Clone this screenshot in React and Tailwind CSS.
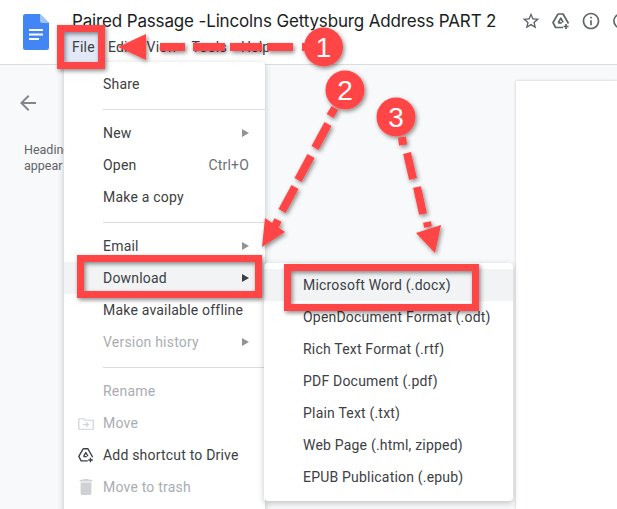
const Arrow = ({ dark }) => (
  <svg width="8" height="8" viewBox="0 0 8 8" className="absolute left-[178px] top-[12px]">
    <polygon points="0,0 7,4 0,8" fill={dark ? "#3c4043" : "#909498"} />
  </svg>
);

const Divider = () => <div className="mb-[7px] ml-[39px] mt-[9px] h-px bg-[#dadce0]" />;

const Item = ({ label, shortcut, sub, disabled, active, icon }) => (
  <div className={`relative flex h-8 items-center pl-[39px] pr-4 text-sm tracking-[0.2px] ${active ? "bg-[#f1f3f4]" : ""} ${disabled ? "text-[#a9adb2]" : "text-[#3c4043]"}`}>
    {icon && <span className="absolute left-[12px] top-[6px] flex h-5 w-5 items-center justify-center">{icon}</span>}
    <span>{label}</span>
    {shortcut && <span className="ml-auto text-[#6b6f73]">{shortcut}</span>}
    {sub && <Arrow dark={active} />}
  </div>
);

const DriveAdd = ({ color, size = 18, strokeWidth = 1.7 }) => (
  <svg width={size} height={size} viewBox="0 0 20 20" fill="none" stroke={color} strokeWidth={strokeWidth} strokeLinejoin="round">
    <path d="M7 3h5l5.5 9.5M7 3L2 11.5 4.6 16.5H12M7 3" />
    <path d="M7.2 11.8L9.8 7.2l2.4 4.2M7.2 11.8h3.6" />
    <path d="M15 13v5M12.5 15.5h5" />
  </svg>
);

const Folder = () => (
  <svg width="16" height="14" viewBox="0 0 16 14" fill="none">
    <path d="M.75 2.75h5l1.5 1.5h8v9H.75z" stroke="#d0d2d5" strokeWidth="1.2" />
    <path d="M5 8.5h5M8 6.2l2.4 2.3L8 10.8" stroke="#d0d2d5" strokeWidth="1.1" />
  </svg>
);

const Trash = () => (
  <svg width="18" height="18" viewBox="3 2 18 20" fill="#cfd1d4">
    <path d="M6 19c0 1.1.9 2 2 2h8c1.1 0 2-.9 2-2V7H6v12zM19 4h-3.5l-1-1h-5l-1 1H5v2h14V4z" />
  </svg>
);

const DocsLogo = () => (
  <svg width="26" height="36" viewBox="0 0 26 36" className="shrink-0">
    <path d="M2.5 0H17l9 9v24.5a2.5 2.5 0 0 1-2.5 2.5h-21A2.5 2.5 0 0 1 0 33.500v-31A2.500 2.500 0 0 1 2.500 0z" fill="#4285f4" />
    <path d="M17 0l9 9h-6.500A2.500 2.500 0 0 1 17 6.500z" fill="#a1c2fa" />
    <path d="M6 15h14v2H6zM6 19.500h14v2H6zM6 24h10v2H6z" fill="#fff" />
  </svg>
);

const Overlay = () => {
  const red = "#ff4444";
  const dashes = [
    [160, 47, 185, 47], [193, 47, 225, 47], [230, 47, 262, 47], [267, 47, 293, 47], [302, 47, 312, 47],
    [335, 108, 330, 116], [328, 124, 315, 148], [311, 156, 298, 180], [295, 187, 282, 211], [278, 220, 275, 226],
    [402, 137, 403, 145], [407, 153, 413, 179], [417, 187, 423, 214], [427, 222, 428, 227],
  ];
  const boxes = [
    [60.5, 28.5, 41, 37],
    [80.5, 258.5, 178, 36],
    [287.5, 267.5, 188, 40],
  ];
  const circles = [[323.5, 47, "1"], [345, 90, "2"], [396, 117, "3"]];
  return (
    <svg width="617" height="509" viewBox="0 0 617 509" className="pointer-events-none absolute left-0 top-0">
      <defs>
        <filter id="s" x="-20%" y="-20%" width="150%" height="150%">
          <feDropShadow dx="1.500" dy="2" stdDeviation="2" floodColor="#000" floodOpacity="0.45" />
        </filter>
      </defs>
      <g filter="url(#s)">
        {boxes.map(([x, y, w, h], i) => (
          <rect key={i} x={x} y={y} width={w} height={h} fill="none" stroke={red} strokeWidth="7" />
        ))}
        {dashes.map(([a, b, c, d], i) => (
          <line key={i} x1={a} y1={b} x2={c} y2={d} stroke={red} strokeWidth="8" />
        ))}
        <polygon points="118,47 146,34 146,60" fill={red} />
        <polygon points="262,247 285,232 265,218" fill={red} />
        <polygon points="435,253 416,233 441,225" fill={red} />
        {circles.map(([x, y]) => (
          <circle key={x} cx={x} cy={y} r="19.500" fill={red} />
        ))}
      </g>
      {circles.map(([x, y, t]) => (
        <text key={t} x={x} y={y + 10} textAnchor="middle" fill="#fff" fontSize="28" fontFamily="'Liberation Sans', sans-serif">
          {t}
        </text>
      ))}
    </svg>
  );
};

export default function App() {
  return (
    <div className="relative flex h-[509px] w-[617px] flex-col overflow-hidden bg-[#f8f9fa] font-['Roboto',sans-serif]">
      <header className="flex h-[65px] shrink-0 border-b border-[#dadce0] bg-white pl-[23px]">
        <div className="mt-[14px]"><DocsLogo /></div>
        <div className="ml-[23px] flex min-w-0 flex-1 flex-col">
          <div className="mt-[10px] flex h-6 items-center">
            <span className="whitespace-nowrap text-[17px] tracking-[-0.15px] text-[#1a1d21] font-['Inter',sans-serif]">
              Paired Passage -Lincolns Gettysburg Address PART 2
            </span>
          </div>
          <nav className="mt-[3px] flex gap-[14px] text-sm tracking-[0.2px] text-[#3c4043]">
            <span className="w-[22px]">File</span><span>Edit</span><span>View</span><span>Tools</span><span>Help</span>
          </nav>
        </div>
        <div className="absolute left-[521px] top-[11px] flex items-center gap-[10px]">
          <svg width="20" height="20" viewBox="0 0 24 24" fill="#5f6368"><path d="M22 9.240l-7.190-.620L12 2 9.190 8.630 2 9.240l5.460 4.730L5.820 21 12 17.270 18.180 21l-1.630-7.030L22 9.240zM12 15.400l-3.760 2.270 1-4.280-3.320-2.880 4.380-.380L12 6.100l1.710 4.040 4.380.380-3.320 2.880 1 4.280L12 15.400z" /></svg>
          <DriveAdd color="#5f6368" size={20} />
          <svg width="20" height="20" viewBox="0 0 24 24" fill="#5f6368"><path d="M11 7h2v2h-2zm0 4h2v6h-2zm1-9C6.480 2 2 6.480 2 12s4.480 10 10 10 10-4.480 10-10S17.520 2 12 2zm0 18c-4.410 0-8-3.590-8-8s3.590-8 8-8 8 3.590 8 8-3.590 8-8 8z" /></svg>
          <svg width="20" height="20" viewBox="0 0 24 24" fill="none" stroke="#5f6368" strokeWidth="2"><circle cx="12" cy="12" r="8.500" /></svg>
        </div>
      </header>

      <main className="flex flex-1">
        <aside className="w-[64px] shrink-0 pl-[16px] pt-[26px] text-[#5f6368]">
          <svg width="24" height="24" viewBox="0 0 24 24" fill="#80868b"><path d="M20 11H7.830l5.590-5.590L12 4l-8 8 8 8 1.410-1.410L7.830 13H20v-2z" /></svg>
          <p className="ml-[8px] mt-[27px] w-[100px] text-[12.5px] leading-4">Heading<br />appear</p>
        </aside>
        <div className="ml-[452px] mt-4 flex-1 bg-white shadow-[0_0_3px_rgba(0,0,0,0.2)]" />
      </main>

      <div className="absolute left-[64px] top-[62px] h-[460px] w-[201px] rounded-t bg-white pt-[6px] shadow-[0_2px_6px_rgba(60,64,67,0.3)]">
        <Item label="Share" />
        <Divider />
        <Item label="New" sub />
        <Item label="Open" shortcut="Ctrl+O" />
        <Item label="Make a copy" />
        <Divider />
        <Item label="Email" sub />
        <Item label="Download" sub active />
        <Item label="Make available offline" />
        <Item label="Version history" sub disabled />
        <Divider />
        <Item label="Rename" disabled />
        <Item label="Move" disabled icon={<Folder />} />
        <Item label="Add shortcut to Drive" icon={<DriveAdd color="#3c4043" size={18} strokeWidth={1.5} />} />
        <Item label="Move to trash" disabled icon={<Trash />} />
      </div>

      <div className="absolute left-[264px] top-[263px] w-[249px] rounded bg-white py-[6px] pb-2 shadow-[0_2px_6px_rgba(60,64,67,0.3)]">
        {["Microsoft Word (.docx)", "OpenDocument Format (.odt)", "Rich Text Format (.rtf)", "PDF Document (.pdf)", "Plain Text (.txt)", "Web Page (.html, zipped)", "EPUB Publication (.epub)"].map((t, i) => (
          <div key={t} className={`flex h-8 items-center pl-[39px] text-sm tracking-[0.2px] text-[#3c4043] ${i === 0 ? "bg-[#f1f3f4]" : ""}`}>{t}</div>
        ))}
      </div>

      <div className="absolute left-[64px] top-[30px] h-[32px] w-[38px] rounded bg-[#e3e8f7]" />
      <span className="absolute left-[72px] top-[37px] text-sm tracking-[0.2px] text-[#3c4043]">File</span>

      <Overlay />
    </div>
  );
}
